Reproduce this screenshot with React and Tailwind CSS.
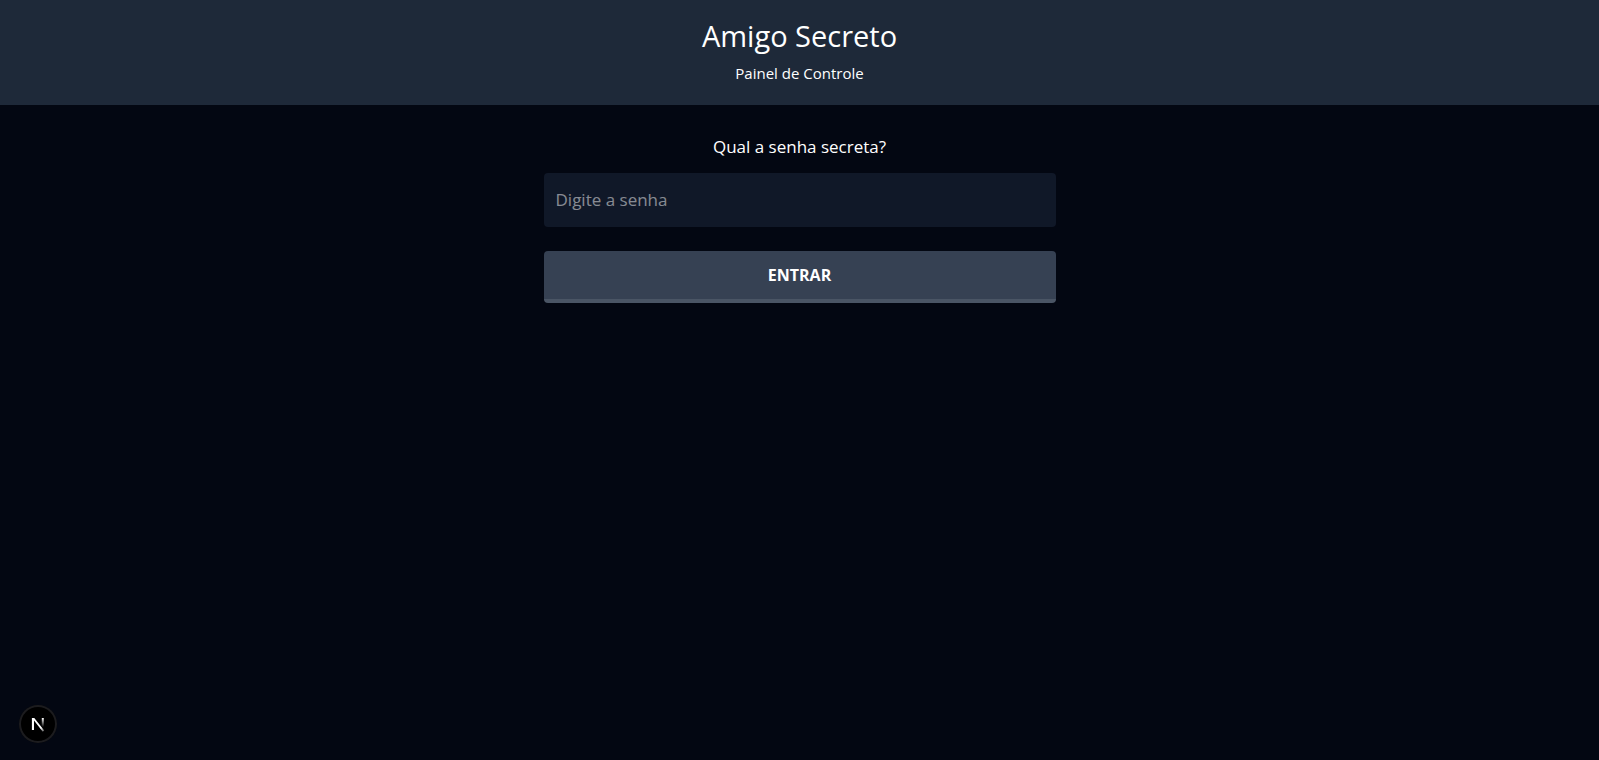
import { useState } from "react";

function NextLogo() {
  return (
    <svg viewBox="0 0 38 38" className="size-[38px] shrink-0" fill="none" aria-hidden="true">
      <defs>
        <linearGradient id="diagonal" x1="19" y1="19" x2="25" y2="27" gradientUnits="userSpaceOnUse">
          <stop stopColor="#fff" />
          <stop offset="0.5" stopColor="#fff" />
          <stop offset="1" stopColor="#fff" stopOpacity="0.2" />
        </linearGradient>
        <linearGradient id="stem" x1="23" y1="13" x2="23" y2="22" gradientUnits="userSpaceOnUse">
          <stop stopColor="#fff" />
          <stop offset="1" stopColor="#fff" stopOpacity="0" />
        </linearGradient>
      </defs>
      <path d="M12.9 13H15.3L25.2 25.6L23.8 26.8L15 15.6V25H12.9Z" fill="url(#diagonal)" />
      <path d="M22.8 13H24.8V22H22.8Z" fill="url(#stem)" />
    </svg>
  );
}

export default function App() {
  const [password, setPassword] = useState("");

  return (
    <div className="min-h-screen bg-gray-950 font-['Open_Sans',sans-serif] text-white">
      <header className="bg-gray-800 px-5 pt-[18px] pb-5 text-center">
        <h1 className="mb-[7px] text-[29px] leading-9">Amigo Secreto</h1>
        <p className="text-[15px] leading-6">Painel de Controle</p>
      </header>

      <main className="mx-auto max-w-lg pt-7 text-center">
        <form onSubmit={(event) => event.preventDefault()}>
          <label htmlFor="password" className="mb-3 block text-[17px] leading-7">
            Qual a senha secreta?
          </label>
          <input
            id="password"
            type="password"
            placeholder="Digite a senha"
            value={password}
            onChange={(event) => setPassword(event.target.value)}
            className="mb-6 block w-full rounded bg-gray-900 p-3 text-[17px] leading-[30px] outline-none placeholder:text-white/50"
          />
          <button
            type="submit"
            className="block w-full rounded border-b-4 border-gray-600 bg-gray-700 p-3 text-base font-bold"
          >
            ENTRAR
          </button>
        </form>
      </main>

      <button
        type="button"
        aria-label="Next.js"
        className="fixed bottom-[17px] left-[19px] flex size-[38px] items-center justify-center rounded-full bg-black ring-2 ring-[#1c1c1f] ring-inset"
      >
        <NextLogo />
      </button>
    </div>
  );
}
